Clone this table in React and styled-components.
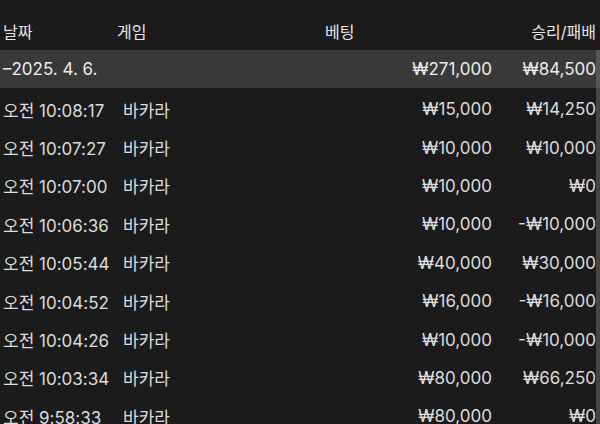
import styled, { createGlobalStyle } from "styled-components";

const ROWS = [
	{ time: "오전 10:08:17", game: "바카라", bet: "₩15,000", win: "₩14,250" },
	{ time: "오전 10:07:27", game: "바카라", bet: "₩10,000", win: "₩10,000" },
	{ time: "오전 10:07:00", game: "바카라", bet: "₩10,000", win: "₩0" },
	{ time: "오전 10:06:36", game: "바카라", bet: "₩10,000", win: "-₩10,000" },
	{ time: "오전 10:05:44", game: "바카라", bet: "₩40,000", win: "₩30,000" },
	{ time: "오전 10:04:52", game: "바카라", bet: "₩16,000", win: "-₩16,000" },
	{ time: "오전 10:04:26", game: "바카라", bet: "₩10,000", win: "-₩10,000" },
	{ time: "오전 10:03:34", game: "바카라", bet: "₩80,000", win: "₩66,250" },
	{ time: "오전 9:58:33", game: "바카라", bet: "₩80,000", win: "₩0" },
];

export default function App() {
	return (
		<>
			<GlobalStyle />
			<Page>
				<HeaderRow>
					<HeadCell>날짜</HeadCell>
					<HeadCell $shift="-6px">게임</HeadCell>
					<HeadCell $shift="22px">베팅</HeadCell>
					<HeadCell $align="end">승리/패배</HeadCell>
				</HeaderRow>
				<Body>
					<Table>
						<GroupRow>
							<Cell>–2025. 4. 6.</Cell>
							<Cell />
							<Cell $align="end">₩271,000</Cell>
							<Cell $align="end">₩84,500</Cell>
						</GroupRow>
						<List>
							{ROWS.map((r, i) => (
								<Row key={i}>
									<Cell>{r.time}</Cell>
									<Cell>{r.game}</Cell>
									<Cell $align="end">{r.bet}</Cell>
									<Cell $align="end">{r.win}</Cell>
								</Row>
							))}
						</List>
					</Table>
					<Track />
				</Body>
			</Page>
		</>
	);
}

// Style
const GlobalStyle = createGlobalStyle`
	html, body {
		margin: 0;
		padding: 0;
		background: #1b1b1b;
	}
	body {
		font-family: Inter, "Noto Sans CJK KR", sans-serif;
	}
`;

const Page = styled.div`
	width: 600px;
	height: 424px;
	overflow: hidden;
	background: #1b1b1b;
	color: #dcdcdc;
	display: flex;
	flex-direction: column;
`;

const HeaderRow = styled.div`
	display: grid;
	grid-template-columns: 120px 180px 192px 104px;
	align-items: center;
	height: 50px;
	flex-shrink: 0;
	padding-right: 4px;
`;

const HeadCell = styled.div`
	font-size: 16px;
	color: #e6e6e6;
	justify-self: ${props => props.$align || "start"};
	margin-left: ${props => props.$shift || "0"};
	padding-left: 3px;
	padding-top: 11px;
`;

const Body = styled.div`
	flex: 1;
	display: flex;
	min-height: 0;
`;

const Table = styled.div`
	flex: 1;
	display: flex;
	flex-direction: column;
`;

const GroupRow = styled.div`
	display: grid;
	grid-template-columns: 120px 180px 192px 104px;
	align-items: center;
	height: 38px;
	flex-shrink: 0;
	background: #393939;
	color: #ececec;
`;

const List = styled.div`
	padding-top: 2px;
	display: flex;
	flex-direction: column;
	flex-shrink: 0;
`;

const Row = styled.div`
	display: grid;
	grid-template-columns: 120px 180px 192px 104px;
	align-items: center;
	height: 38.4px;
	flex-shrink: 0;
`;

const Cell = styled.div`
	font-size: 17px;
	white-space: nowrap;
	justify-self: ${props => props.$align || "start"};
	padding-left: ${props => (props.$align ? "0" : "3px")};
`;

const Track = styled.div`
	width: 4px;
	flex-shrink: 0;
	background: linear-gradient(#575757 0, #575757 38px, #454545 38px);
`;
